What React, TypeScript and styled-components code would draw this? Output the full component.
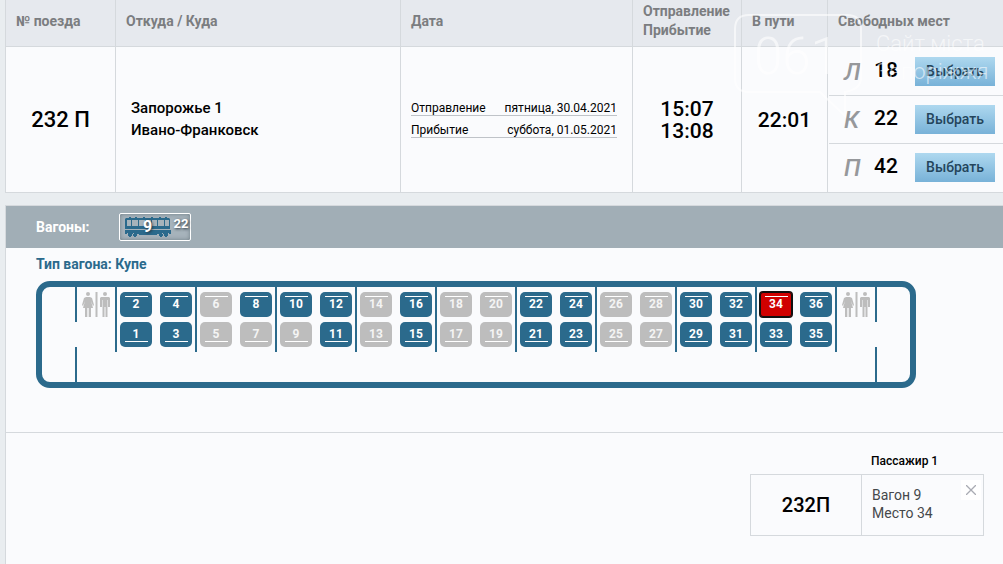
import React from 'react';
import styled, { createGlobalStyle, css } from 'styled-components';

const BLUE = '#2b6a8c';
const LINE = '#d5d9dd';
const PAPER = '#fafbfd';

const GlobalStyle = createGlobalStyle`
  * { box-sizing: border-box; }
  body {
    margin: 0;
    background: #e9edf0;
    color: #000;
    font-family: Roboto, "Liberation Sans", sans-serif;
    font-size: 14px;
  }
  button { font-family: inherit; cursor: pointer; }
`;

const Page = styled.div`
  position: relative;
  display: flex;
  flex-direction: column;
  gap: 12px;
  min-height: 100vh;
  padding-left: 5px;
  overflow: hidden;
`;

const TrainTable = styled.table`
  width: 100%;
  table-layout: fixed;
  border-spacing: 0;
  background: ${PAPER};
`;

const Col = styled.col<{ $width?: number }>`
  width: ${({ $width }) => ($width ? `${$width}px` : 'auto')};
`;

const HeadCell = styled.th`
  padding: 2px 10px 6px;
  border-left: 1px solid ${LINE};
  border-bottom: 1px solid ${LINE};
  background: #e6e9ee;
  color: #7b7d80;
  font-size: 14px;
  font-weight: 700;
  line-height: 19px;
  text-align: left;
  white-space: nowrap;
`;

const Cell = styled.td<{ $center?: boolean; $flush?: boolean }>`
  padding: ${({ $center, $flush }) => ($flush ? '0 0 0 1px' : $center ? '0' : '0 15px 2px 10px')};
  border-left: 1px solid ${LINE};
  border-bottom: 1px solid ${LINE};
  text-align: ${({ $center }) => ($center ? 'center' : 'left')};
  vertical-align: middle;
`;

const Big = styled.div<{ $time?: boolean }>`
  font-size: ${({ $time }) => ($time ? '21px' : '22px')};
  font-weight: 500;
  line-height: 22px;
`;

const Station = styled.div`
  padding-left: 5px;
  font-size: 15px;
  font-weight: 500;
  line-height: 22px;
`;

const DateRow = styled.div`
  display: flex;
  justify-content: space-between;
  margin-bottom: 3px;
  border-bottom: 1px solid #bfc3c8;
  padding-top: 4px;
  font-size: 12px;
  line-height: 14px;
`;

const Places = styled.ul`
  margin: 0;
  padding: 1px 0 0;
  list-style: none;
`;

const Place = styled.li`
  display: flex;
  align-items: center;
  height: 48px;
  padding-left: 15px;
  border-bottom: 1px solid ${LINE};
  &:last-child {
    border-bottom: 0;
    padding-bottom: 1px;
  }
`;

const PlaceType = styled.span`
  width: 21px;
  color: #96989b;
  font-size: 24px;
  font-style: italic;
  font-weight: 500;
  line-height: 28px;
`;

const PlaceCount = styled.span`
  width: 42px;
  padding-bottom: 4px;
  font-size: 21px;
  font-weight: 500;
  text-align: center;
`;

const ChooseButton = styled.button`
  width: 80px;
  height: 29px;
  margin-left: 8px;
  padding: 0 0 1px;
  border: 0;
  background: linear-gradient(#aed8ef, #78b2d8);
  color: #24455c;
  font-size: 14px;
  font-weight: 500;
`;

const Panel = styled.section`
  flex: 1;
  border-top: 1px solid ${LINE};
  border-left: 1px solid ${LINE};
  background: ${PAPER};
`;

const WagonBar = styled.div`
  display: flex;
  align-items: center;
  gap: 29px;
  height: 42px;
  padding-left: 30px;
  background: #a1aeb6;
  color: #fff;
  font-weight: 700;
`;

const WagonButton = styled.button`
  display: flex;
  gap: 3px;
  width: 72px;
  height: 28px;
  padding: 3px 0 0 5px;
  border: 1px solid #fff;
  border-radius: 2px;
  background: #a6b3bb;
  box-shadow: inset 0 0 4px #6f7d86;
  color: #fff;
  font-weight: 700;
  text-shadow: 1px 1px 3px #22303a;
`;

const WagonPicture = styled.span`
  position: relative;
  width: 46px;
  height: 20px;
`;

const WagonNumber = styled.span`
  position: absolute;
  inset: 0;
  font-size: 16px;
  line-height: 20px;
  text-align: center;
`;

const WagonFree = styled.span`
  font-size: 13px;
  line-height: 14px;
`;

const WagonType = styled.h2`
  margin: 0;
  padding: 6px 30px 7px;
  color: ${BLUE};
  font-size: 14px;
  font-weight: 700;
  line-height: 20px;
`;

const Carriage = styled.div`
  display: flex;
  width: 880px;
  height: 107px;
  margin-left: 30px;
  border: 6px solid ${BLUE};
  border-radius: 14px;
`;

const splitWall = css`
  border-left: 2px solid;
  border-image: linear-gradient(${BLUE} 35px, transparent 35px, transparent 60px, ${BLUE} 60px) 1;
  border-image-width: 0 0 0 2px;
`;

const Vestibule = styled.div<{ $walled?: boolean }>`
  flex: 1;
  ${({ $walled }) => $walled && splitWall}
`;

const Section = styled.div<{ $split?: boolean }>`
  flex: none;
  width: 40px;
  height: ${({ $split }) => ($split ? '95px' : '65px')};
  padding: 5px 0 0 5px;
  border-left: 2px solid ${BLUE};
  ${({ $split }) => $split && splitWall}
`;

const Compartment = styled.div`
  display: grid;
  flex: none;
  grid-template-columns: 32px 32px;
  grid-template-rows: 25px 25px;
  gap: 5px 8px;
  width: 80px;
  height: 65px;
  padding: 5px 3px;
  border-left: 2px solid ${BLUE};
`;

const Seat = styled.button<{ $lower?: boolean; $state: 'free' | 'taken' | 'picked' }>`
  display: flex;
  flex-direction: ${({ $lower }) => ($lower ? 'column-reverse' : 'column')};
  align-items: center;
  justify-content: flex-start;
  padding: ${({ $lower }) => ($lower ? '0 0 5px' : '4px 0 0')};
  border: 0;
  border-radius: 5px;
  background: ${({ $state }) => ({ free: BLUE, taken: '#bdbdbd', picked: '#d00000' })[$state]};
  color: ${({ $state }) => ($state === 'taken' ? '#f4f4f4' : '#fff')};
  font-size: 12px;
  font-weight: 700;
  line-height: 14px;

  &::before {
    content: '';
    width: 23px;
    height: 1px;
    flex: none;
    background: #fff;
  }

  ${({ $state }) =>
    $state === 'picked' &&
    css`
      border-radius: 3px;
      box-shadow: 0 0 0 1px #101010, inset 0 0 0 1px #101010;
    `}
`;

const Order = styled.div`
  display: flex;
  justify-content: flex-end;
  margin-top: 44px;
  padding: 20px 19px 28px;
  border-top: 1px solid ${LINE};
`;

const OrderBox = styled.div`
  width: 234px;
`;

const Passenger = styled.h3`
  margin: 0;
  padding-left: 121px;
  padding-bottom: 5px;
  font-size: 12px;
  font-weight: 500;
  line-height: 16px;
`;

const Ticket = styled.div`
  display: flex;
  height: 62px;
  border: 1px solid ${LINE};
`;

const TicketTrain = styled.div`
  display: flex;
  align-items: center;
  justify-content: center;
  width: 111px;
  border-right: 1px solid ${LINE};
  font-size: 20px;
  font-weight: 500;
`;

const TicketSeat = styled.div`
  flex: 1;
  padding: 11px 0 0 10px;
  color: #45484b;
  font-size: 14px;
  line-height: 18px;
`;

const CloseButton = styled.button`
  display: flex;
  align-items: center;
  justify-content: center;
  width: 20px;
  height: 20px;
  margin: 5px 2px 0 0;
  padding: 0;
  border: 0;
  background: #fff;
`;

const Mark = styled.div`
  position: absolute;
  top: 14px;
  right: 12px;
  display: flex;
  gap: 14px;
  color: rgba(255, 255, 255, 0.6);
  font-family: Roboto, sans-serif;
  font-weight: 300;
  pointer-events: none;
`;

const Bubble = styled.div`
  position: relative;
  width: 128px;
  height: 104px;
  padding-left: 20px;
  font-size: 51px;
  line-height: 86px;

  svg { position: absolute; top: 0; left: 0; }
`;

const MarkText = styled.div`
  width: 115px;
  padding-top: 16px;
  font-size: 22px;
  line-height: 28px;
  white-space: nowrap;
`;

const WagonIcon = () => (
  <svg width="46" height="20" viewBox="0 0 46 20" fill={BLUE} aria-hidden="true">
    <path
      fillRule="evenodd"
      d="M1 1h3V0h2v1h4V0h2v1h6V0h2v1h6V0h2v1h6V0h2v1h4V0h2v1h2l1 1v10H0V2zM2 3v6h4V3zM7 3v6h6V3zM14 3v6h6V3zM21 3v6h5V3zM27 3v6h5V3zM33 3v6h6V3zM40 3v6h4V3z"
    />
    <path d="M0 13h46v4h-2v-1h-3v1h-3v-1h-4v1h-2v1H14v-1h-2v-1H8v1H5v-1H2v1H0z" />
    <path d="M3 16h3v1h1v2H6v1H4v-1H3zM9 16h3v3h-1v1H9v-1H8v-2h1zM34 16h3v1h1v2h-1v1h-2v-1h-1zM40 16h3v3h-1v1h-2v-1h-1v-2h1z" />
  </svg>
);

const ToiletIcon = () => (
  <svg width="28" height="25" viewBox="0 0 28 25" fill="#bdbdbd" role="img" aria-label="WC">
    <circle cx="6" cy="2" r="2" />
    <path d="M4 5h4l2 1 2 7-1 1-2-5 2 7H9v9H6.700v-9H5.300v9H3v-9H1l2-7-2 5-1-1 2-7z" />
    <path d="M13.500 0h2v25h-2z" />
    <circle cx="23" cy="2" r="2" />
    <path d="M19 5h8l1 1v9h-2V8h-.500v17h-2v-10h-1v10h-2V8H20v7h-2V6z" />
  </svg>
);

const columns = [110, 285, 232, 109, 86, undefined];
const places = [['Л', 18], ['К', 22], ['П', 42]] as const;
const freeSeats = new Set([1, 2, 3, 4, 8, 10, 11, 12, 15, 16, 21, 22, 23, 24, 29, 30, 31, 32, 33, 35, 36]);

const SeatButton = ({ number }: { number: number }) => {
  const state = number === 34 ? 'picked' : freeSeats.has(number) ? 'free' : 'taken';
  return (
    <Seat type="button" $state={state} $lower={number % 2 === 1} aria-pressed={state === 'picked'}>
      {number}
    </Seat>
  );
};

export default function App() {
  return (
    <Page>
      <GlobalStyle />
      <TrainTable>
        <colgroup>
          {columns.map((width, i) => <Col key={i} $width={width} />)}
        </colgroup>
        <thead>
          <tr>
            <HeadCell>№ поезда</HeadCell>
            <HeadCell>Откуда / Куда</HeadCell>
            <HeadCell>Дата</HeadCell>
            <HeadCell>Отправление<br />Прибытие</HeadCell>
            <HeadCell>В пути</HeadCell>
            <HeadCell>Свободных мест</HeadCell>
          </tr>
        </thead>
        <tbody>
          <tr>
            <Cell $center><Big>232 П</Big></Cell>
            <Cell>
              <Station>Запорожье 1</Station>
              <Station>Ивано-Франковск</Station>
            </Cell>
            <Cell>
              <DateRow><span>Отправление</span><span>пятница, 30.04.2021</span></DateRow>
              <DateRow><span>Прибытие</span><span>суббота, 01.05.2021</span></DateRow>
            </Cell>
            <Cell $center><Big $time>15:07</Big><Big $time>13:08</Big></Cell>
            <Cell $center><Big $time>22:01</Big></Cell>
            <Cell $flush>
              <Places>
                {places.map(([type, count]) => (
                  <Place key={type}>
                    <PlaceType>{type}</PlaceType>
                    <PlaceCount>{count}</PlaceCount>
                    <ChooseButton type="button">Выбрать</ChooseButton>
                  </Place>
                ))}
              </Places>
            </Cell>
          </tr>
        </tbody>
      </TrainTable>

      <Panel>
        <WagonBar>
          <span>Вагоны:</span>
          <WagonButton type="button">
            <WagonPicture>
              <WagonIcon />
              <WagonNumber>9</WagonNumber>
            </WagonPicture>
            <WagonFree>22</WagonFree>
          </WagonButton>
        </WagonBar>
        <WagonType>Тип вагона: Купе</WagonType>
        <Carriage>
          <Vestibule />
          <Section $split><ToiletIcon /></Section>
          {Array.from({ length: 9 }, (_, i) => (
            <Compartment key={i}>
              {[2, 4, 1, 3].map((n) => <SeatButton key={n} number={i * 4 + n} />)}
            </Compartment>
          ))}
          <Section><ToiletIcon /></Section>
          <Vestibule $walled />
        </Carriage>
        <Order>
          <OrderBox>
            <Passenger>Пассажир 1</Passenger>
            <Ticket>
              <TicketTrain>232П</TicketTrain>
              <TicketSeat>Вагон 9<br />Место 34</TicketSeat>
              <CloseButton type="button" aria-label="Удалить">
                <svg width="10" height="10" viewBox="0 0 10 10" stroke="#a9abb3" strokeWidth="1.300">
                  <path d="M0 0l10 10M10 0L0 10" />
                </svg>
              </CloseButton>
            </Ticket>
          </OrderBox>
        </Order>
      </Panel>

      <Mark>
        <Bubble>
          061
          <svg width="128" height="104" viewBox="0 0 128 104" fill="none" stroke="rgba(255,255,255,0.6)" strokeWidth="2">
            <path d="M15 1h98q14 0 14 14v49q0 11-16 14v24L86 78H15Q1 78 1 64V15Q1 1 15 1z" />
          </svg>
        </Bubble>
        <MarkText>Сайт міста<br />Запоріжжя</MarkText>
      </Mark>
    </Page>
  );
}
